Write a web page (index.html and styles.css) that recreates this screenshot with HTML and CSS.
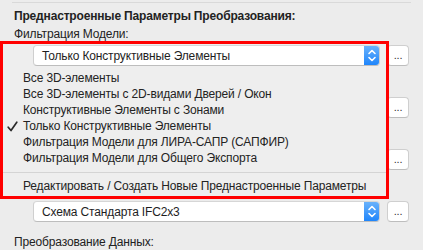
FILE: index.html
```html
<!DOCTYPE html>
<html>
<head>
<meta charset="utf-8">
<link rel="stylesheet" href="styles.css">
</head>
<body>
<div class="panel">
  <div class="heading">Преднастроенные Параметры Преобразования:</div>
  <div class="field">
    <div class="label">Фильтрация Модели:</div>
    <div class="row">
      <div class="select"><span class="sel-text">Только Конструктивные Элементы</span><span class="stepper"><svg width="16" height="21" viewBox="0 0 16 21"><path d="M5 8.5 L8 5.5 L11 8.5 M5 12.5 L8 15.5 L11 12.5" fill="none" stroke="#fff" stroke-width="1.6" stroke-linecap="round" stroke-linejoin="round"/></svg></span></div>
      <div class="btn">...</div>
    </div>
  </div>
  <div class="field">
    <div class="label"></div>
    <div class="row">
      <div class="select"><span class="sel-text"></span><span class="stepper"></span></div>
      <div class="btn">...</div>
    </div>
  </div>
  <div class="field">
    <div class="label"></div>
    <div class="row">
      <div class="select"><span class="sel-text"></span><span class="stepper"></span></div>
      <div class="btn">...</div>
    </div>
  </div>
  <div class="field">
    <div class="label"></div>
    <div class="row">
      <div class="select"><span class="sel-text">Схема Стандарта IFC2x3</span><span class="stepper"><svg width="16" height="21" viewBox="0 0 16 21"><path d="M5 8.5 L8 5.5 L11 8.5 M5 12.5 L8 15.5 L11 12.5" fill="none" stroke="#fff" stroke-width="1.6" stroke-linecap="round" stroke-linejoin="round"/></svg></span></div>
      <div class="btn">...</div>
    </div>
  </div>
  <div class="field">
    <div class="label">Преобразование Данных:</div>
  </div>
</div>

<div class="overlay">
  <div class="ov-select">
    <div class="select"><span class="sel-text">Только Конструктивные Элементы</span><span class="stepper"><svg width="16" height="21" viewBox="0 0 16 21"><path d="M5 8.5 L8 5.5 L11 8.5 M5 12.5 L8 15.5 L11 12.5" fill="none" stroke="#fff" stroke-width="1.6" stroke-linecap="round" stroke-linejoin="round"/></svg></span></div>
  </div>
  <ul class="menu">
    <li class="item">Все 3D-элементы</li>
    <li class="item">Все 3D-элементы с 2D-видами Дверей / Окон</li>
    <li class="item">Конструктивные Элементы с Зонами</li>
    <li class="item checked"><svg class="check" width="11" height="11" viewBox="0 0 11 11"><path d="M1.2 6.2 L4 9.5 L9.8 1.2" fill="none" stroke="#2a2a2a" stroke-width="1.7" stroke-linecap="round" stroke-linejoin="round"/></svg>Только Конструктивные Элементы</li>
    <li class="item">Фильтрация Модели для ЛИРА-САПР (САПФИР)</li>
    <li class="item">Фильтрация Модели для Общего Экспорта</li>
    <li class="sep"></li>
    <li class="item">Редактировать / Создать Новые Преднастроенные Параметры</li>
  </ul>
</div>
</body>
</html>
```

FILE: styles.css
```css
html, body {
  margin: 0;
  padding: 0;
}
body {
  width: 423px;
  height: 250px;
  overflow: hidden;
  background: #ececec;
  font-family: "Liberation Sans", Arial, sans-serif;
  font-size: 12px;
  letter-spacing: -0.15px;
  color: #222;
  position: relative;
}
.panel {
  margin: 2px 12px 0 12px;
  border-top: 1px solid #d9d9d9;
  padding: 5px 0 0 2px;
}
.heading {
  font-weight: bold;
  line-height: 16px;
  margin-bottom: 2px;
  letter-spacing: -0.17px;
}
.field {
  margin-bottom: 12px;
}
.label {
  height: 16px;
  line-height: 16px;
  margin-bottom: 3px;
}
.row {
  display: flex;
  align-items: center;
  gap: 7px;
  padding-left: 19px;
}
.select {
  box-sizing: border-box;
  width: 347px;
  height: 21px;
  display: flex;
  align-items: center;
  background: #fff;
  border: 1px solid #cfcfcf;
  border-top-color: #d6d6d6;
  border-bottom-color: #bdbdbd;
  border-radius: 4px;
  overflow: hidden;
}
.sel-text {
  flex: 1;
  padding-left: 8px;
  color: #1e1e1e;
  white-space: nowrap;
}
.stepper {
  width: 16px;
  height: 21px;
  margin: -1px -1px -1px 0;
  background: linear-gradient(#6db4fb, #1b83fb);
  display: flex;
}
.btn {
  box-sizing: border-box;
  width: 22px;
  height: 21px;
  background: #fff;
  border: 1px solid #cfcfcf;
  border-bottom-color: #bdbdbd;
  border-radius: 4px;
  font-size: 11px;
  line-height: 19px;
  text-align: center;
  color: #333;
}
.overlay {
  position: absolute;
  left: 0;
  top: 41px;
  width: 389px;
  height: 158px;
  box-sizing: border-box;
  border: 3px solid #ff0000;
  background: #eeeeee;
}
.ov-select {
  padding: 1px 0 0 30px;
}
.menu {
  list-style: none;
  margin: 4px 0 0 0;
  padding: 0;
}
.item {
  position: relative;
  line-height: 16px;
  padding-left: 20px;
  color: #232323;
  white-space: nowrap;
}
.check {
  position: absolute;
  left: 4px;
  top: 3px;
}
.sep {
  height: 1px;
  background: #d4d4d4;
  margin: 6px 0 5px 0;
}
```
